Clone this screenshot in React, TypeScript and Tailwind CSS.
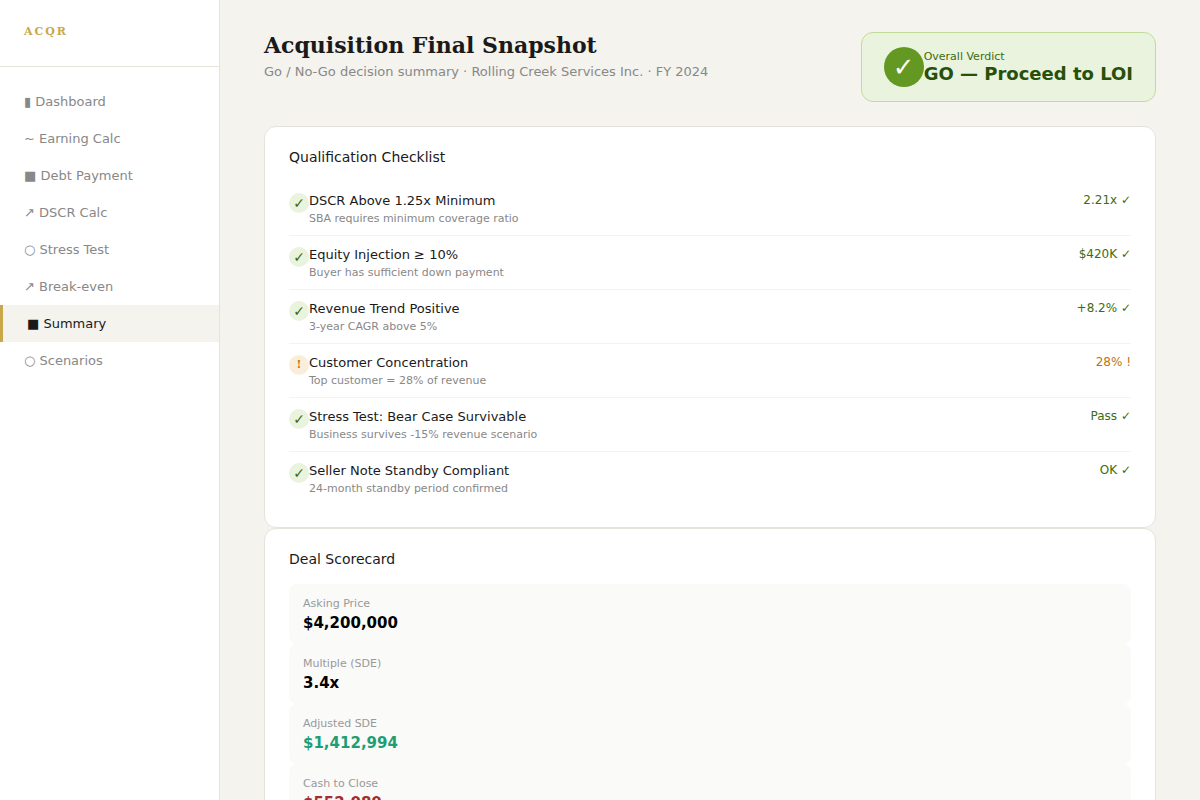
import { clsx } from 'clsx'

type NavItem = { icon: string; label: string; active?: boolean }

const NAV: NavItem[] = [
  { icon: '▮', label: 'Dashboard' },
  { icon: '~', label: 'Earning Calc' },
  { icon: '■', label: 'Debt Payment' },
  { icon: '↗', label: 'DSCR Calc' },
  { icon: '○', label: 'Stress Test' },
  { icon: '↗', label: 'Break-even' },
  { icon: '■', label: 'Summary', active: true },
  { icon: '○', label: 'Scenarios' },
]

type Check = { title: string; note: string; value: string; status: 'pass' | 'warn' }

const CHECKS: Check[] = [
  {
    title: 'DSCR Above 1.25x Minimum',
    note: 'SBA requires minimum coverage ratio',
    value: '2.21x ✓',
    status: 'pass',
  },
  {
    title: 'Equity Injection ≥ 10%',
    note: 'Buyer has sufficient down payment',
    value: '$420K ✓',
    status: 'pass',
  },
  {
    title: 'Revenue Trend Positive',
    note: '3-year CAGR above 5%',
    value: '+8.2% ✓',
    status: 'pass',
  },
  {
    title: 'Customer Concentration',
    note: 'Top customer = 28% of revenue',
    value: '28% !',
    status: 'warn',
  },
  {
    title: 'Stress Test: Bear Case Survivable',
    note: 'Business survives -15% revenue scenario',
    value: 'Pass ✓',
    status: 'pass',
  },
  {
    title: 'Seller Note Standby Compliant',
    note: '24-month standby period confirmed',
    value: 'OK ✓',
    status: 'pass',
  },
]

const SCORES: { label: string; value: string; color: string }[] = [
  { label: 'Asking Price', value: '$4,200,000', color: 'text-black' },
  { label: 'Multiple (SDE)', value: '3.4x', color: 'text-black' },
  { label: 'Adjusted SDE', value: '$1,412,994', color: 'text-[#1d9e75]' },
  { label: 'Cash to Close', value: '$552,080', color: 'text-[#a32d2d]' },
]

export default function App() {
  return (
    <div className="flex min-h-screen bg-[#f4f3ee] font-['DejaVu_Sans',sans-serif] text-[#1a1a1a]">
      <Sidebar />
      <main className="min-w-0 flex-1 px-11 py-8">
        <header className="mb-6 flex items-start justify-between">
          <div>
            <h1 className="font-['DejaVu_Serif',serif] text-[22px] leading-[26px] font-bold">
              Acquisition Final Snapshot
            </h1>
            <p className="mt-1.5 text-[13px] leading-[15px] text-[#888]">
              Go / No-Go decision summary · Rolling Creek Services Inc. · FY 2024
            </p>
          </div>
          <Verdict />
        </header>

        <Card title="Qualification Checklist">
          <ul>
            {CHECKS.map((c) => (
              <CheckRow key={c.title} check={c} />
            ))}
          </ul>
        </Card>

        <Card title="Deal Scorecard">
          <dl>
            {SCORES.map((s) => (
              <div key={s.label} className="rounded-lg bg-[#fafaf8] px-3.5 py-3">
                <dt className="mb-[3px] text-[11px] leading-[15px] text-[#999]">{s.label}</dt>
                <dd className={clsx('text-[15px] leading-[18px] font-bold', s.color)}>
                  {s.value}
                </dd>
              </div>
            ))}
          </dl>
        </Card>
      </main>
    </div>
  )
}

function Sidebar() {
  return (
    <aside className="w-[220px] shrink-0 border-r border-[#e5e3db] bg-white">
      <div className="border-b border-[#e5e3db] px-6 pt-6 pb-[26px]">
        <div className="font-['DejaVu_Serif',serif] text-[11px] leading-[16px] font-bold tracking-[2px] text-[#c9a84c]">
          ACQR
        </div>
      </div>
      <nav className="py-4">
        {NAV.map((item) => (
          <a
            key={item.label}
            href="#"
            aria-current={item.active ? 'page' : undefined}
            className={clsx(
              'block px-6 py-[11px] text-[13px] leading-[15px]',
              item.active
                ? 'border-l-[3px] border-[#c9a84c] bg-[#f4f3ee] text-[#1a1a1a]'
                : 'text-[#888] hover:text-[#1a1a1a]',
            )}
          >
            {item.icon} {item.label}
          </a>
        ))}
      </nav>
    </aside>
  )
}

function Verdict() {
  return (
    <div className="flex items-center rounded-xl border border-[#c0dd97] bg-[#eaf3de] px-[22px] py-3.5">
      <div className="flex size-10 items-center justify-center rounded-full bg-[#639922] text-[26px] leading-none text-white">
        ✓
      </div>
      <div>
        <div className="text-[11px] leading-[13px] text-[#3b6d11]">Overall Verdict</div>
        <div className="text-lg leading-[21px] font-bold text-[#27500a]">
          GO — Proceed to LOI
        </div>
      </div>
    </div>
  )
}

function Card({ title, children }: { title: string; children: React.ReactNode }) {
  return (
    <section className="rounded-xl border border-[#e5e3db] bg-white px-6 py-[22px]">
      <h2 className="mb-4 text-sm leading-[17px]">{title}</h2>
      {children}
    </section>
  )
}

function CheckRow({ check }: { check: Check }) {
  const pass = check.status === 'pass'
  return (
    <li className="flex items-start border-b border-[#f4f3ee] pt-[11px] pb-2.5 last:border-b-0">
      <span
        className={clsx(
          'flex size-5 shrink-0 items-center justify-center rounded-full',
          pass
            ? 'bg-[#eaf3de] text-sm text-[#3b6d11]'
            : "bg-[#faeeda] font-['DejaVu_Serif',serif] text-[11px] font-bold text-[#ba7517]",
        )}
      >
        {pass ? '✓' : '!'}
      </span>
      <div className="flex-1">
        <div className="text-[13px] leading-[15px]">{check.title}</div>
        <div className="mt-1 text-[11px] leading-[13px] text-[#888]">{check.note}</div>
      </div>
      <span
        className={clsx(
          'text-xs leading-[14px]',
          pass ? 'text-[#3b6d11]' : 'text-[#ba7517]',
        )}
      >
        {check.value}
      </span>
    </li>
  )
}
